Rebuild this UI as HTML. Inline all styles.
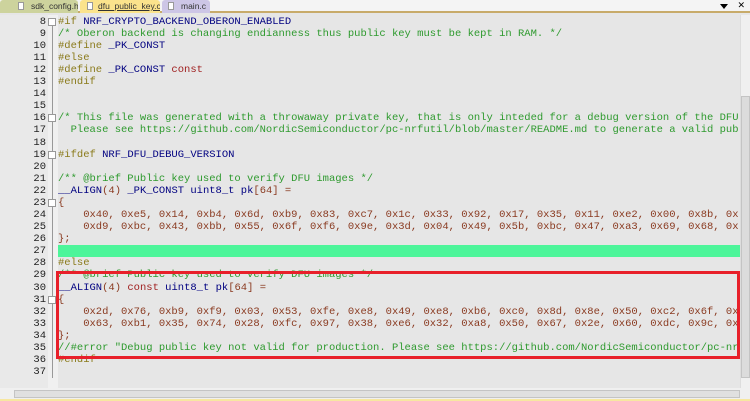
<!DOCTYPE html>
<html><head><meta charset="utf-8"><style>
*{margin:0;padding:0;box-sizing:border-box}
body{width:750px;height:401px;overflow:hidden;background:#e6e6e6;font-family:"Liberation Mono",monospace;font-size:10.5px;position:relative}
.tabbar{position:absolute;left:0;top:0;width:750px;height:13px;background:#f4f4f4;border-bottom:2px solid #c8ab6a}
.tab{position:absolute;top:0;height:13px;font-family:"Liberation Sans",sans-serif;font-size:8.5px;line-height:13px;color:#333;border-radius:3px 3px 0 0;white-space:nowrap;overflow:hidden}
.tab i{position:absolute;top:2px;width:6px;height:8px;background:#fff;border:1px solid #999}
.tab span{position:absolute;top:0}
.gut{position:absolute;left:0;top:15px;width:48px;height:373px;background:#e9e9e9}
.fold{position:absolute;left:48px;top:15px;width:10px;height:373px;background:#f0f0f0}
.ln{position:absolute;left:0;width:46px;text-align:right;color:#222;height:12px;line-height:12px}
.c{position:absolute;left:58px;white-space:pre;height:12px;line-height:12px;color:#000080}
.pp{color:#8a7a1a}.cm{color:#2e9a2e}.kw{color:#a02020}.nm{color:#8a3a20}.op{color:#8a3a20}
.vline{position:absolute;left:52px;width:1px;background:#999}
.box{position:absolute;left:48px;width:8px;height:8px;border:1px solid #999;background:#fff}
</style></head><body>
<div class="tabbar">
<div class="tab" style="left:0;width:78px;background:#cdd39d"><i style="left:18px"></i><span style="left:31px">sdk_config.h</span></div>
<div class="tab" style="left:80px;width:80px;background:#fbe38c"><i style="left:7px"></i><span style="left:18px;text-decoration:underline">dfu_public_key.c</span></div>
<div class="tab" style="left:162px;width:48px;background:#cdc6e6"><i style="left:6px"></i><span style="left:19px">main.c</span></div>
<div style="position:absolute;right:22px;top:4px;width:0;height:0;border-left:4px solid transparent;border-right:4px solid transparent;border-top:5px solid #000"></div>
<div style="position:absolute;right:5px;top:1px;font-size:9px;font-family:'DejaVu Sans'">✕</div>
</div>
<div class="gut"></div><div class="fold"></div>
<div class="vline" style="top:22px;height:356px"></div>
<div style="position:absolute;left:58px;top:245px;width:682px;height:12px;background:#4df59a"></div>
<div id="lines"></div>
<div style="position:absolute;left:56px;top:271px;width:684px;height:88px;border:3px solid #e8202a"></div>
<div style="position:absolute;left:740px;top:15px;width:10px;height:373px;background:#f0f0f0;border-left:1px solid #ddd"></div>
<div style="position:absolute;left:741px;top:96px;width:9px;height:282px;background:#dcdcdc;border:1px solid #c4c4c4"></div>
<div style="position:absolute;left:0;top:388px;width:750px;height:11px;background:#f0f0f0"></div>
<div style="position:absolute;left:14px;top:390px;width:726px;height:8px;background:#e0e0e0;border:1px solid #c4c4c4"></div>
<div style="position:absolute;left:0;top:399px;width:750px;height:2px;background:#f7e7a0"></div>
<script>
var L=[
[8,'<span class="pp">#if</span> NRF_CRYPTO_BACKEND_OBERON_ENABLED'],
[9,'<span class="cm">/* Oberon backend is changing endianness thus public key must be kept in RAM. */</span>'],
[10,'<span class="pp">#define</span> _PK_CONST'],
[11,'<span class="pp">#else</span>'],
[12,'<span class="pp">#define</span> _PK_CONST <span class="kw">const</span>'],
[13,'<span class="pp">#endif</span>'],[14,''],[15,''],
[16,'<span class="cm">/* This file was generated with a throwaway private key, that is only inteded for a debug version of the DFU</span>'],
[17,'<span class="cm">  Please see https://github.com/NordicSemiconductor/pc-nrfutil/blob/master/README.md to generate a valid pub</span>'],
[18,''],
[19,'<span class="pp">#ifdef</span> NRF_DFU_DEBUG_VERSION'],[20,''],
[21,'<span class="cm">/** @brief Public key used to verify DFU images */</span>'],
[22,'__ALIGN<span class="op">(</span><span class="nm">4</span><span class="op">)</span> _PK_CONST uint8_t pk<span class="op">[</span><span class="nm">64</span><span class="op">] =</span>'],
[23,'<span class="op">{</span>'],
[24,'<span class="nm">    0x40, 0xe5, 0x14, 0xb4, 0x6d, 0xb9, 0x83, 0xc7, 0x1c, 0x33, 0x92, 0x17, 0x35, 0x11, 0xe2, 0x00, 0x8b, 0x</span>'],
[25,'<span class="nm">    0xd9, 0xbc, 0x43, 0xbb, 0x55, 0x6f, 0xf6, 0x9e, 0x3d, 0x04, 0x49, 0x5b, 0xbc, 0x47, 0xa3, 0x69, 0x68, 0x</span>'],
[26,'<span class="op">};</span>'],[27,''],
[28,'<span class="pp">#else</span>'],
[29,'<span class="cm">/** @brief Public key used to verify DFU images */</span>'],
[30,'__ALIGN<span class="op">(</span><span class="nm">4</span><span class="op">)</span> <span class="kw">const</span> uint8_t pk<span class="op">[</span><span class="nm">64</span><span class="op">] =</span>'],
[31,'<span class="op">{</span>'],
[32,'<span class="nm">    0x2d, 0x76, 0xb9, 0xf9, 0x03, 0x53, 0xfe, 0xe8, 0x49, 0xe8, 0xb6, 0xc0, 0x8d, 0x8e, 0x50, 0xc2, 0x6f, 0x</span>'],
[33,'<span class="nm">    0x63, 0xb1, 0x35, 0x74, 0x28, 0xfc, 0x97, 0x38, 0xe6, 0x32, 0xa8, 0x50, 0x67, 0x2e, 0x60, 0xdc, 0x9c, 0x</span>'],
[34,'<span class="op">};</span>'],
[35,'<span class="cm">//#error "Debug public key not valid for production. Please see https://github.com/NordicSemiconductor/pc-nr</span>'],
[36,'<span class="pp">#endif</span>'],[37,'']];
var h='';
L.forEach(function(l){var t=(15.7+(l[0]-8)*12.08).toFixed(1);
h+='<div class="ln" style="top:'+t+'px">'+l[0]+'</div><div class="c" style="top:'+t+'px;width:682px;overflow:hidden">'+l[1]+'</div>';
if([8,16,19,23,31].indexOf(l[0])>=0)h+='<div class="box" style="top:'+(+t+2)+'px"></div>';
});
document.getElementById('lines').innerHTML=h;
</script>
</body></html>
